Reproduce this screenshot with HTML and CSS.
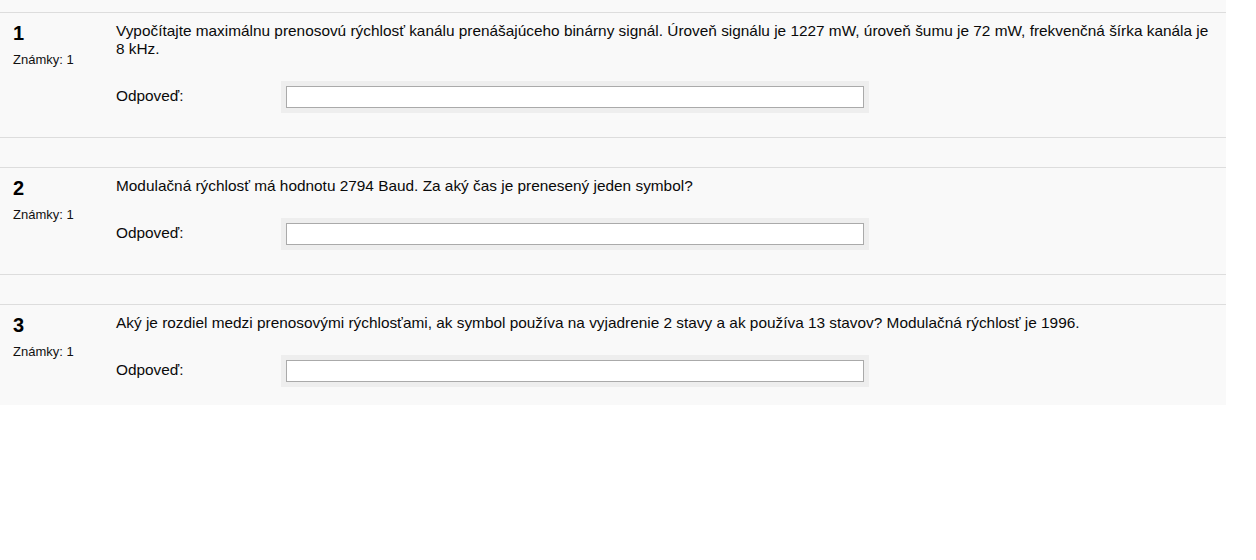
FILE: index.html
```html
<!DOCTYPE html>
<html lang="sk">
<head>
<meta charset="utf-8">
<title>Test</title>
<link rel="stylesheet" href="styles.css">
</head>
<body>
<div class="quiz">
  <div class="que">
    <div class="info">
      <div class="no">1</div>
      <div class="grade">Známky: 1</div>
    </div>
    <div class="content">
      <div class="qtext">Vypočítajte maximálnu prenosovú rýchlosť kanálu prenášajúceho binárny signál. Úroveň signálu je 1227 mW, úroveň šumu je 72 mW, frekvenčná šírka kanála je 8 kHz.</div>
      <div class="answer">
        <label class="label">Odpoveď:</label>
        <span class="field"><input type="text" class="input"></span>
      </div>
    </div>
  </div>
  <div class="que">
    <div class="info">
      <div class="no">2</div>
      <div class="grade">Známky: 1</div>
    </div>
    <div class="content">
      <div class="qtext">Modulačná rýchlosť má hodnotu 2794 Baud. Za aký čas je prenesený jeden symbol?</div>
      <div class="answer">
        <label class="label">Odpoveď:</label>
        <span class="field"><input type="text" class="input"></span>
      </div>
    </div>
  </div>
  <div class="que que-last">
    <div class="info">
      <div class="no">3</div>
      <div class="grade">Známky: 1</div>
    </div>
    <div class="content">
      <div class="qtext">Aký je rozdiel medzi prenosovými rýchlosťami, ak symbol používa na vyjadrenie 2 stavy a ak používa 13 stavov? Modulačná rýchlosť je 1996.</div>
      <div class="answer">
        <label class="label">Odpoveď:</label>
        <span class="field"><input type="text" class="input"></span>
      </div>
    </div>
  </div>
</div>
</body>
</html>
```
FILE: styles.css
```css
html, body {
  margin: 0;
  padding: 0;
  background: #ffffff;
}
body {
  font-family: "Liberation Sans", Arial, sans-serif;
  color: #0a0a0a;
}
.quiz {
  width: 1226px;
  background: #f9f9f9;
  padding-top: 12px;
}
.que {
  display: grid;
  grid-template-columns: 116px 1fr;
  border-top: 1px solid #dddddd;
  border-bottom: 1px solid #dddddd;
  margin-bottom: 29px;
  padding: 9px 0 24px 0;
}
.que-last {
  border-bottom: 0;
  margin-bottom: 0;
  padding-bottom: 18px;
}
.info {
  padding-left: 13px;
}
.no {
  font-size: 20px;
  font-weight: bold;
  line-height: 22px;
  color: #000000;
}
.grade {
  margin-top: 8px;
  font-size: 13px;
  line-height: 16px;
  color: #111111;
}
.content {
  padding-right: 12px;
}
.qtext {
  font-size: 15.38px;
  line-height: 18px;
}
.answer {
  display: flex;
  align-items: flex-start;
  margin-top: 23px;
}
.label {
  width: 165px;
  padding-top: 6px;
  font-size: 15.38px;
  line-height: 18px;
}
.field {
  display: block;
  background: #eeeeee;
  padding: 5px;
}
.input {
  display: block;
  box-sizing: border-box;
  width: 578px;
  height: 22px;
  margin: 0;
  border: 1px solid #aaaaaa;
  background: #ffffff;
  padding: 0 3px;
  font-family: "Liberation Sans", Arial, sans-serif;
  font-size: 15px;
}
```
